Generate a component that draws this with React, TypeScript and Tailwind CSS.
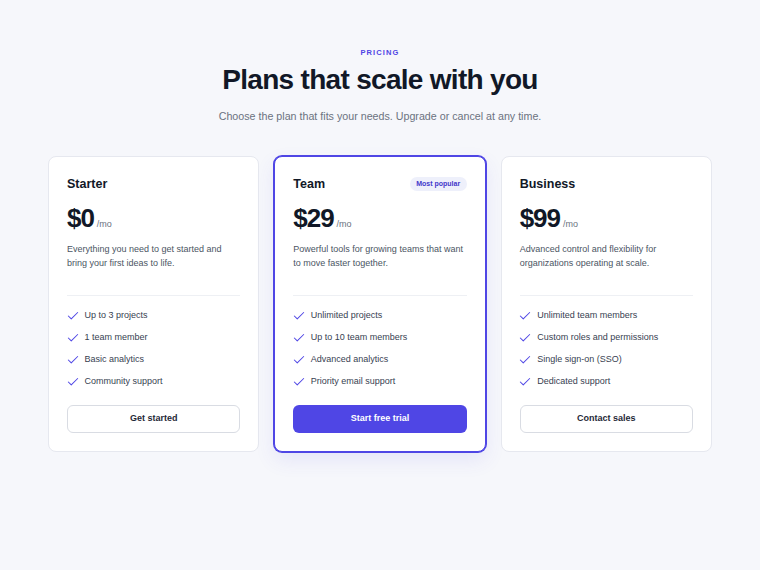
import { Check } from 'lucide-react';

type Plan = {
  name: string;
  price: string;
  blurb: string;
  features: string[];
  cta: string;
  featured?: boolean;
};

const plans: Plan[] = [
  {
    name: 'Starter',
    price: '$0',
    blurb: 'Everything you need to get started and bring your first ideas to life.',
    features: ['Up to 3 projects', '1 team member', 'Basic analytics', 'Community support'],
    cta: 'Get started',
  },
  {
    name: 'Team',
    price: '$29',
    blurb: 'Powerful tools for growing teams that want to move faster together.',
    features: ['Unlimited projects', 'Up to 10 team members', 'Advanced analytics', 'Priority email support'],
    cta: 'Start free trial',
    featured: true,
  },
  {
    name: 'Business',
    price: '$99',
    blurb: 'Advanced control and flexibility for organizations operating at scale.',
    features: ['Unlimited team members', 'Custom roles and permissions', 'Single sign-on (SSO)', 'Dedicated support'],
    cta: 'Contact sales',
  },
];

function PlanCard({ plan }: { plan: Plan }) {
  return (
    <div
      className={
        plan.featured
          ? 'flex flex-col rounded-lg border border-[#4f46e5] bg-white p-[18px] ring-1 ring-[#4f46e5] shadow-[0_8px_20px_rgba(79,70,229,0.10)]'
          : 'flex flex-col rounded-lg border border-[#e6e8ef] bg-white p-[18px]'
      }
    >
      <div className="flex h-[18px] items-center justify-between">
        <h3 className="text-[12.5px] font-bold leading-[18px] text-[#111827]">{plan.name}</h3>
        {plan.featured && (
          <span className="rounded-full bg-[#eef0fb] px-[6.5px] py-[3px] text-[7px] font-bold leading-[8px] text-[#4338ca]">
            Most popular
          </span>
        )}
      </div>

      <div className="mt-[10px] flex items-baseline gap-[3px]">
        <span className="text-[26px] font-bold leading-[30px] tracking-[-0.04em] text-[#111827]">{plan.price}</span>
        <span className="text-[9px] text-[#6b7280]">/mo</span>
      </div>

      <p className="mt-[9px] h-[42px] text-[9px] leading-[14px] text-[#4b5563]">{plan.blurb}</p>

      <div className="mt-[11px] border-t border-[#eef0f4]" />

      <ul className="mt-[12px] flex flex-col gap-[6px]">
        {plan.features.map((f) => (
          <li key={f} className="flex h-[16px] items-center gap-[5px] text-[9px] text-[#374151]">
            <Check className="-ml-[1.5px] h-[14px] w-[14px] shrink-0 text-[#4f46e5]" strokeWidth={1.75} />
            <span>{f}</span>
          </li>
        ))}
      </ul>

      <button
        className={
          plan.featured
            ? 'mt-[15px] h-[28px] rounded-md bg-[#4f46e5] text-[9px] font-bold text-white'
            : 'mt-[15px] h-[28px] rounded-md border border-[#d9dce3] bg-white text-[9px] font-bold text-[#1f2937]'
        }
      >
        {plan.cta}
      </button>
    </div>
  );
}

export default function App() {
  return (
    <div className="min-h-screen bg-[#f6f7fb] pt-[48px] font-['Liberation_Sans',Arial,sans-serif]">
      <div className="text-center">
        <p className="text-[7.5px] font-bold leading-[10px] tracking-[0.15em] text-[#4f46e5]">PRICING</p>
        <h1 className="mt-[5px] text-[28px] font-bold leading-[34px] tracking-tight text-[#111827]">
          Plans that scale with you
        </h1>
        <p className="mt-[11px] text-[10.7px] leading-[16px] text-[#6b7280]">
          Choose the plan that fits your needs. Upgrade or cancel at any time.
        </p>
      </div>

      <div className="mx-auto mt-[32px] grid w-[664px] grid-cols-3 gap-[15px]">
        {plans.map((p) => (
          <PlanCard key={p.name} plan={p} />
        ))}
      </div>
    </div>
  );
}
